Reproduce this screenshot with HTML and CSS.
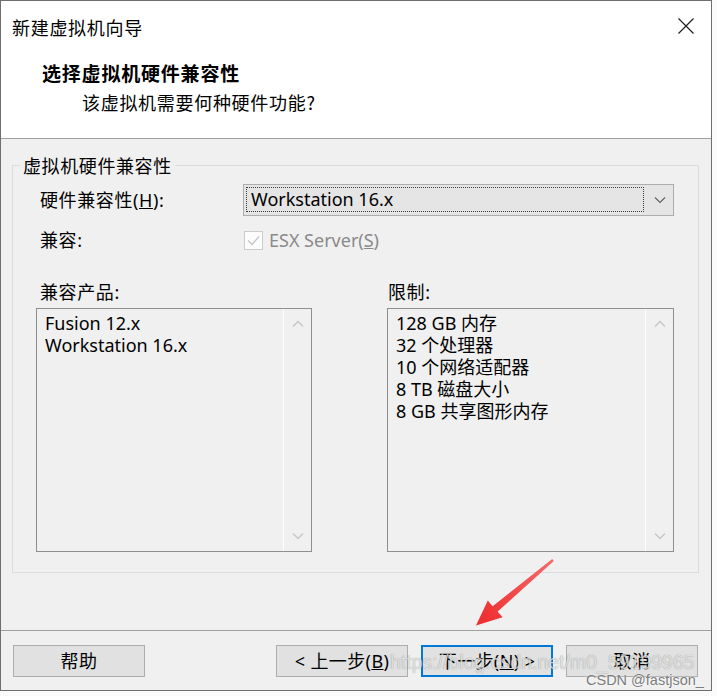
FILE: index.html
```html
<!DOCTYPE html>
<html lang="zh-CN">
<head>
<meta charset="utf-8">
<title>新建虚拟机向导</title>
<link rel="stylesheet" href="styles.css">
</head>
<body>
<div class="window">
  <div class="head">
    <div class="titlebar">
      <span class="title">新建虚拟机向导</span>
      <svg class="close" width="18" height="18" viewBox="0 0 18 18"><path d="M1.5 1.5 L16.5 16.5 M16.5 1.5 L1.5 16.5" stroke="#1f1f1f" stroke-width="1.2" fill="none"/></svg>
    </div>
    <div class="header">
      <div class="h-title">选择虚拟机硬件兼容性</div>
      <div class="h-sub">该虚拟机需要何种硬件功能?</div>
    </div>
  </div>

  <div class="content">
    <fieldset class="group">
      <legend class="legend">虚拟机硬件兼容性</legend>
      <div class="group-body">
        <div class="row row-combo">
          <span class="lbl">硬件兼容性(<u>H</u>):</span>
          <div class="combo">
            <div class="combo-focus">Workstation 16.x</div>
            <svg class="combo-arrow" width="12" height="8" viewBox="0 0 12 8"><path d="M1 1.5 L6 6.5 L11 1.5" stroke="#606060" stroke-width="1.1" fill="none"/></svg>
          </div>
        </div>
        <div class="row row-check">
          <span class="lbl">兼容:</span>
          <span class="check">
            <span class="box"><svg width="17" height="17" viewBox="0 0 17 17"><path d="M3 8.5 L7 12.5 L14 4.5" stroke="#c4c4c4" stroke-width="1.3" fill="none"/></svg></span>
            <span class="check-text">ESX Server(<u>S</u>)</span>
          </span>
        </div>
        <div class="lists">
          <div class="col">
            <div class="lbl lbl-list">兼容产品:</div>
            <div class="listbox">
              <ul class="items">
                <li>Fusion 12.x</li>
                <li>Workstation 16.x</li>
              </ul>
              <div class="scroll">
                <svg width="12" height="8" viewBox="0 0 12 8"><path d="M1 6.5 L6 1.5 L11 6.5" stroke="#c6c6c6" stroke-width="1.3" fill="none"/></svg>
                <svg width="12" height="8" viewBox="0 0 12 8"><path d="M1 1.5 L6 6.5 L11 1.5" stroke="#c6c6c6" stroke-width="1.3" fill="none"/></svg>
              </div>
            </div>
          </div>
          <div class="col">
            <div class="lbl lbl-list lbl-right">限制:</div>
            <div class="listbox">
              <ul class="items">
                <li>128 GB 内存</li>
                <li>32 个处理器</li>
                <li>10 个网络适配器</li>
                <li>8 TB 磁盘大小</li>
                <li>8 GB 共享图形内存</li>
              </ul>
              <div class="scroll">
                <svg width="12" height="8" viewBox="0 0 12 8"><path d="M1 6.5 L6 1.5 L11 6.5" stroke="#c6c6c6" stroke-width="1.3" fill="none"/></svg>
                <svg width="12" height="8" viewBox="0 0 12 8"><path d="M1 1.5 L6 6.5 L11 1.5" stroke="#c6c6c6" stroke-width="1.3" fill="none"/></svg>
              </div>
            </div>
          </div>
        </div>
      </div>
    </fieldset>
  </div>

  <div class="footer">
    <button class="btn">帮助</button>
    <div class="spacer"></div>
    <button class="btn">&lt; 上一步(<u>B</u>)</button>
    <button class="btn btn-default">下一步(<u>N</u>) &gt;</button>
    <button class="btn">取消</button>
  </div>

  <svg class="arrow" width="90" height="80" viewBox="470 555 90 80">
    <defs>
      <linearGradient id="ag" x1="553" y1="560" x2="476" y2="625" gradientUnits="userSpaceOnUse">
        <stop offset="0" stop-color="#f56a6a"/>
        <stop offset="1" stop-color="#ee2a2c"/>
      </linearGradient>
    </defs>
    <polygon fill="url(#ag)" points="553.8,560.9 497.6,611.6 502.6,617.3 476,625.5 487.8,600.6 492.6,606.3 552.2,559.1"/>
  </svg>
  <div class="watermark">https://blog.csdn.net/m0_59199965</div>
  <div class="csdn">CSDN @fastjson_</div>
</div>
</body>
</html>
```

FILE: styles.css
```css
* { box-sizing: border-box; }

html, body {
  margin: 0;
  padding: 0;
  background: #fbfbfb;
}

body {
  font-family: "Segoe UI", "Noto Sans", "Noto Sans CJK SC", sans-serif;
  font-size: 18px;
  color: #000;
}

.window {
  position: relative;
  width: 712px;
  height: 691px;
  border: 1px solid #6e6e6e;
  background: #f0f0f0;
  display: flex;
  flex-direction: column;
  overflow: hidden;
}

/* ---------- head (white) ---------- */
.head {
  height: 138px;
  background: #fff;
  border-bottom: 1px solid #a0a0a0;
  flex: none;
}

.titlebar {
  height: 52px;
  display: flex;
  align-items: center;
  justify-content: space-between;
  padding: 0 16px 0 11px;
}

.title {
  font-family: "Noto Sans CJK SC", sans-serif;
  font-size: 18px;
  line-height: 24px;
  letter-spacing: 0.7px;
  color: #000;
}

.close {
  display: block;
  margin-top: -2px;
}

.header {
  padding-top: 8px;
}

.h-title {
  font-family: "Noto Sans CJK SC", sans-serif;
  font-weight: 700;
  font-size: 19px;
  line-height: 24px;
  letter-spacing: 0.8px;
  padding-left: 41px;
}

.h-sub {
  font-family: "Noto Sans CJK SC", sans-serif;
  font-size: 18px;
  line-height: 24px;
  letter-spacing: 0.7px;
  padding-left: 81px;
  margin-top: 5px;
}

/* ---------- content ---------- */
.content {
  height: 491px;
  flex: none;
  padding-top: 15px;
}

.group {
  margin: 0 12px 0 11px;
  padding: 0;
  border: 1px solid #dcdcdc;
  min-width: 0;
}

.legend {
  margin-left: 7px;
  padding: 0 3px;
  line-height: 22px;
  font-family: "Noto Sans CJK SC", sans-serif;
  letter-spacing: 0.6px;
}

.group-body {
  padding: 8px 24px 20px 23px;
}

.lbl {
  letter-spacing: 0.6px;
  line-height: 22px;
  padding-left: 4px;
}

.row {
  display: grid;
  grid-template-columns: 207px 431px;
  align-items: center;
}

.row-combo {
  height: 32px;
}

.combo {
  height: 32px;
  background: #e5e5e5;
  border: 1px solid #adadad;
  display: flex;
  align-items: center;
  padding: 2px 0 3px 2px;
}

.combo-focus {
  flex: none;
  width: 398px;
  height: 100%;
  border: 1px dotted #3a3a3a;
  padding-left: 4px;
  line-height: 23px;
  white-space: nowrap;
}

.combo-arrow {
  display: block;
  margin-left: 10px;
}

.row-check {
  margin-top: 13px;
  height: 22px;
}

.check {
  display: flex;
  align-items: center;
  color: #8a8a8a;
  margin-left: 1px;
}

.box {
  width: 19px;
  height: 19px;
  border: 1px solid #cccccc;
  background: #fcfcfc;
  display: flex;
  align-items: center;
  justify-content: center;
  margin-top: 1px;
}

.box svg { display: block; }

.check-text {
  margin-left: 6px;
  line-height: 22px;
}

.lists {
  margin-top: 30px;
  display: grid;
  grid-template-columns: 276px 287px;
  column-gap: 75px;
}

.lbl-list {
  margin-bottom: 5px;
}

.lbl-right {
  padding-left: 1px;
}

.listbox {
  height: 244px;
  border: 1px solid #8f8f8f;
  background: #f0f0f0;
  display: flex;
}

.items {
  list-style: none;
  margin: 0;
  padding: 3px 0 0 8px;
  flex: 1;
  line-height: 22px;
  white-space: nowrap;
}

.scroll {
  width: 28px;
  flex: none;
  border-left: 1px solid #fdfdfd;
  display: flex;
  flex-direction: column;
  justify-content: space-between;
  align-items: center;
  padding: 11px 0 11px;
}

.scroll svg { display: block; }

/* ---------- footer ---------- */
.footer {
  flex: 1;
  border-top: 1px solid #a0a0a0;
  display: flex;
  align-items: flex-start;
  padding: 14px 13px 0 12px;
  gap: 13px;
}

.spacer { flex: 1; }

.btn {
  width: 132px;
  height: 32px;
  background: #e1e1e1;
  border: 1px solid #adadad;
  font: inherit;
  color: #000;
  line-height: 22px;
  padding: 0;
  letter-spacing: 0.4px;
  cursor: default;
}

.btn-default {
  border: 2px solid #0078d7;
}

/* ---------- annotations (overlays) ---------- */
.arrow {
  position: absolute;
  left: 469px;
  top: 554px;
}

.watermark {
  position: absolute;
  left: 389px;
  top: 649px;
  font-family: "Liberation Sans", sans-serif;
  font-size: 19.5px;
  line-height: 24px;
  color: rgba(255, 255, 255, 0.72);
  text-shadow: 0 0 1px rgba(0, 0, 0, 0.45);
  white-space: nowrap;
  pointer-events: none;
}

.csdn {
  position: absolute;
  left: 585px;
  top: 670px;
  font-family: "Liberation Sans", sans-serif;
  font-size: 14.5px;
  line-height: 18px;
  color: #7d7d7d;
  text-shadow: 0 0 2px #fff;
  white-space: nowrap;
}
```
